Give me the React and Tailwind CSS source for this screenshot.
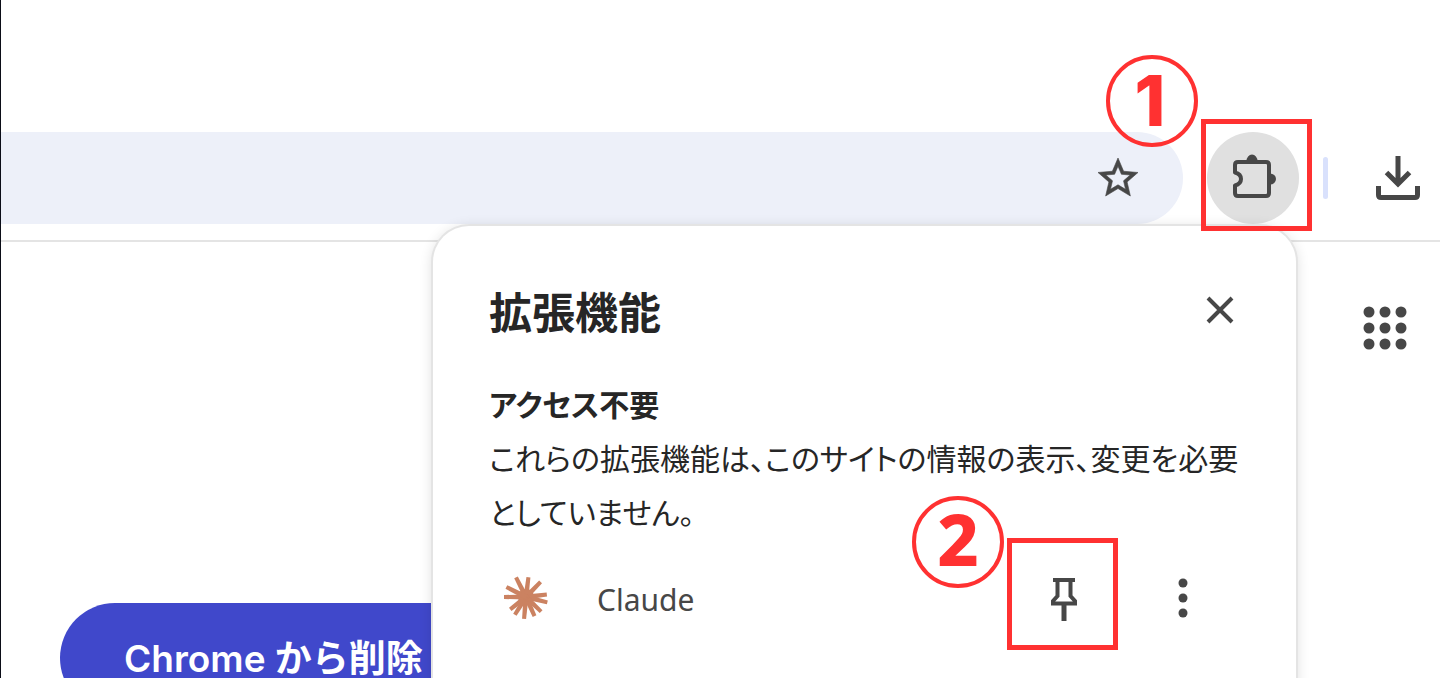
import clsx from 'clsx'

// angle and length of each ray of the logo
const RAYS = [
  [-117, 22], [-83, 20], [-46, 21], [-7, 21], [14, 22], [44, 21],
  [66, 21], [95, 22], [122, 21], [142, 20], [180, 22], [207, 22],
]

function StarIcon() {
  return (
    <svg viewBox="0 0 24 24" className="size-12 fill-[#474747] stroke-[#474747]" strokeWidth="0.3">
      <path d="M22 9.24l-7.19-.62L12 2 9.19 8.63 2 9.24l5.46 4.73L5.82 21 12 17.27 18.18 21l-1.63-7.03L22 9.24zM12 15.4l-3.76 2.27 1-4.28-3.32-2.88 4.38-.38L12 6.1l1.71 4.04 4.38.38-3.32 2.88 1 4.28L12 15.4z" />
    </svg>
  )
}

function PuzzleIcon() {
  return (
    <svg viewBox="0 0 48 48" className="size-12" fill="none">
      <path d="M6 11q0-3 3-3h28q3 0 3 3v28q0 3-3 3H9q-3 0-3-3v-7.500c4-1 6-3.500 6-6.500s-2-5.500-6-6.500z"
        stroke="#474747" strokeWidth="4" strokeLinejoin="round" />
      <path d="M17.500 7a5.500 6.500 0 0 1 11 0zM41 19.500a6 5.500 0 0 1 0 11z" fill="#474747" />
    </svg>
  )
}

function DownloadIcon() {
  return (
    <svg viewBox="0 0 48 48" className="size-12" fill="none" stroke="#474747" strokeWidth="5">
      <path d="M24 2v29M12.500 18.500L24 30l11.500-11.500" />
      <path d="M4.500 32v9q0 2.500 2.500 2.500h34q2.500 0 2.500-2.500v-9" />
    </svg>
  )
}

function AppsIcon() {
  return (
    <svg viewBox="0 0 48 48" className="size-12 fill-[#474747]">
      {[8, 24, 40].map((y) => [8, 24, 40].map((x) => <circle key={`${x}-${y}`} cx={x} cy={y} r="5.5" />))}
    </svg>
  )
}

function CloseIcon() {
  return (
    <svg viewBox="0 0 32 32" className="size-8" stroke="#474747" strokeWidth="4">
      <path d="M4 4l24 24M28 4L4 28" />
    </svg>
  )
}

function PinIcon() {
  return (
    <svg viewBox="0 0 48 48" className="size-12" fill="none" stroke="#474747" strokeWidth="4">
      <path d="M13 5h22M17.500 5v16L13 26v2.500h22V26l-4.500-5V5" />
      <path d="M24 29v17" strokeWidth="5" />
    </svg>
  )
}

function MoreIcon() {
  return (
    <svg viewBox="0 0 48 48" className="size-12 fill-[#474747]">
      {[8, 23, 38].map((y) => <circle key={y} cx="24" cy={y} r="4.5" />)}
    </svg>
  )
}

function ClaudeLogo() {
  return (
    <svg viewBox="-25 -22 48 48" className="size-12" fill="#cb8261">
      <circle r="8" />
      {RAYS.map(([angle, length]) => (
        <path key={angle} d={`M0-2.500L${length}-2v4L0 2.500z`} transform={`rotate(${angle})`} />
      ))}
    </svg>
  )
}

// red frame with a numbered circle beside its upper left corner
function Callout({ number, className, circleClass }) {
  return (
    <span className={clsx('pointer-events-none absolute z-20 h-28 w-[111px] border-[5px] border-[#ff3131]', className)}>
      <span className={clsx('absolute -left-[100px] flex size-[92px] items-center justify-center rounded-full border-4 border-[#ff3131] leading-none font-extrabold text-[#ff3131]', circleClass)}>
        {number}
      </span>
    </span>
  )
}

function ExtensionsPopup() {
  return (
    <section className="absolute top-[226px] right-[144px] z-10 h-[600px] w-[863px] rounded-[36px] bg-white px-14 pt-[52px] shadow-[0_0_0_2px_#e4e4e4,0_2px_14px_rgba(0,0,0,0.16)]">
      <div className="flex items-center justify-between">
        <h1 className="text-[43px] leading-[64px] font-bold">拡張機能</h1>
        <button type="button" aria-label="閉じる" className="mr-1"><CloseIcon /></button>
      </div>
      <h2 className="mt-[34px] text-[30px] leading-[54px] font-bold [font-feature-settings:'palt']">アクセス不要</h2>
      <p className="text-[30px] leading-[54px] [font-feature-settings:'palt']">
        これらの拡張機能は、このサイトの情報の表示、変更を必要<br />としていません。
      </p>
      <div className="mt-[37px] flex items-center px-3">
        <ClaudeLogo />
        <span className="ml-12 flex-1 font-['Noto_Sans',sans-serif] text-[30px] text-[#474747]">Claude</span>
        <button type="button" aria-label="固定" className="relative">
          <PinIcon />
          <Callout number={2} className="-top-[37px] -left-[33px]"
            circleClass="-top-[47px] pb-2 font-['Noto_Sans',sans-serif] text-[72px]" />
        </button>
        <button type="button" aria-label="その他" className="ml-[71px] mr-[21px]"><MoreIcon /></button>
      </div>
    </section>
  )
}

export default function App() {
  return (
    <div className="relative flex h-screen flex-col overflow-hidden border-l border-[#0b0d17] bg-white font-['Noto_Sans_CJK_JP',sans-serif] text-[#262626]">
      <header className="flex items-center border-b-2 border-[#e4e4e4] pt-[132px] pr-[18px] pb-4">
        <div className="flex h-[92px] flex-1 items-center justify-end rounded-r-full bg-[#edf0f9] pr-[41px]">
          <button type="button" aria-label="ブックマーク"><StarIcon /></button>
        </div>
        <button type="button" aria-label="拡張機能"
          className="relative ml-6 flex size-[92px] items-center justify-center rounded-full bg-[#e0e0e0]">
          <PuzzleIcon />
          <Callout number={1} className="-top-[13px] -left-[6px]"
            circleClass="-top-[69px] pr-1 font-['Inter',sans-serif] text-[70px]" />
        </button>
        <span className="ml-6 h-[42px] w-[5px] rounded-full bg-[#d9e1fc]" />
        <button type="button" aria-label="ダウンロード" className="ml-[46px]"><DownloadIcon /></button>
      </header>
      <main className="flex flex-1 flex-col justify-between pt-[62px]">
        <button type="button" aria-label="アプリ" className="mr-[31px] self-end"><AppsIcon /></button>
        <button type="button"
          className="-mb-[35px] ml-[59px] h-[110px] self-start rounded-full bg-[#4048cb] px-16 font-['Inter','Noto_Sans_CJK_JP',sans-serif] text-[37px] leading-none font-semibold whitespace-nowrap text-white">
          Chrome から削除
        </button>
      </main>
      <ExtensionsPopup />
    </div>
  )
}
